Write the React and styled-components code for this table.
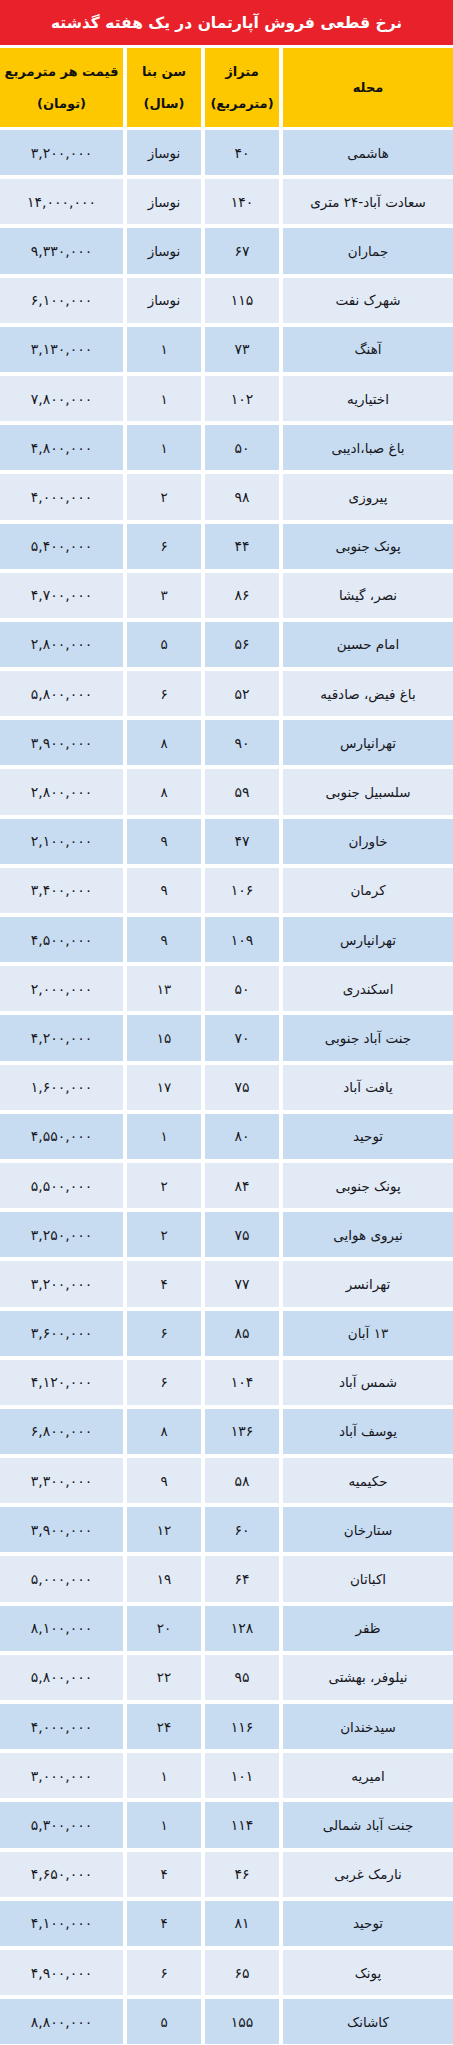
import React from "react";
import styled, { createGlobalStyle } from "styled-components";

const GlobalStyle = createGlobalStyle`
  html, body {
    margin: 0;
    padding: 0;
    background: #ffffff;
  }
  body {
    font-family: "DejaVu Sans", "Noto Sans", sans-serif;
  }
`;

const toFa = (v) =>
  String(v).replace(/[0-9]/g, (d) => "۰۱۲۳۴۵۶۷۸۹"[Number(d)]);

const fmt = (n) => toFa(n.toLocaleString("en-US"));

const rows = [
  ["هاشمی", 40, "نوساز", 3200000],
  ["سعادت آباد-۲۴ متری", 140, "نوساز", 14000000],
  ["جماران", 67, "نوساز", 9330000],
  ["شهرک نفت", 115, "نوساز", 6100000],
  ["آهنگ", 73, 1, 3130000],
  ["اختیاریه", 102, 1, 7800000],
  ["باغ صبا،ادیبی", 50, 1, 4800000],
  ["پیروزی", 98, 2, 4000000],
  ["پونک جنوبی", 44, 6, 5400000],
  ["نصر، گیشا", 86, 3, 4700000],
  ["امام حسین", 56, 5, 2800000],
  ["باغ فیض، صادقیه", 52, 6, 5800000],
  ["تهرانپارس", 90, 8, 3900000],
  ["سلسبیل جنوبی", 59, 8, 2800000],
  ["خاوران", 47, 9, 2100000],
  ["کرمان", 106, 9, 3400000],
  ["تهرانپارس", 109, 9, 4500000],
  ["اسکندری", 50, 13, 2000000],
  ["جنت آباد جنوبی", 70, 15, 4200000],
  ["یافت آباد", 75, 17, 1600000],
  ["توحید", 80, 1, 4550000],
  ["پونک جنوبی", 84, 2, 5500000],
  ["نیروی هوایی", 75, 2, 3250000],
  ["تهرانسر", 77, 4, 3200000],
  ["۱۳ آبان", 85, 6, 3600000],
  ["شمس آباد", 104, 6, 4120000],
  ["یوسف آباد", 136, 8, 6800000],
  ["حکیمیه", 58, 9, 3300000],
  ["ستارخان", 60, 12, 3900000],
  ["اکباتان", 64, 19, 5000000],
  ["ظفر", 128, 20, 8100000],
  ["نیلوفر، بهشتی", 95, 22, 5800000],
  ["سیدخندان", 116, 24, 4000000],
  ["امیریه", 101, 1, 3000000],
  ["جنت آباد شمالی", 114, 1, 5300000],
  ["نارمک غربی", 46, 4, 4650000],
  ["توحید", 81, 4, 4100000],
  ["پونک", 65, 6, 4900000],
  ["کاشانک", 155, 5, 8800000],
];

const Page = styled.div`
  width: 453px;
  direction: rtl;
  display: flex;
  flex-direction: column;
  gap: 3px;
`;

const TitleBar = styled.div`
  height: 45px;
  background: #e8212b;
  color: #ffffff;
  font-weight: bold;
  font-size: 15.5px;
  display: flex;
  align-items: center;
  justify-content: center;
  letter-spacing: -0.2px;
  white-space: nowrap;
`;

const GridRow = styled.div`
  display: grid;
  grid-template-columns: 170px 74px 74px 1fr;
  column-gap: 4px;
  height: ${(p) => p.$h};
`;

const HeadCell = styled.div`
  background: #fdc800;
  color: #111111;
  font-weight: bold;
  font-size: 13px;
  line-height: 32px;
  display: flex;
  flex-direction: column;
  align-items: center;
  justify-content: center;
  text-align: center;
  white-space: nowrap;
  letter-spacing: -0.4px;
`;

const Body = styled.div`
  display: flex;
  flex-direction: column;
  gap: 4px;
`;

const Cell = styled.div`
  background: ${(p) => (p.$dark ? "#c7dcf1" : "#e2eaf5")};
  color: #17171d;
  font-size: 13.5px;
  display: flex;
  align-items: center;
  justify-content: center;
  white-space: nowrap;
  letter-spacing: -0.2px;
`;

const NumCell = styled(Cell)`
  font-size: 14px;
  letter-spacing: 0.3px;
`;

export default function App() {
  return (
    <>
      <GlobalStyle />
      <Page>
        <TitleBar>نرخ قطعی فروش آپارتمان در یک هفته گذشته</TitleBar>
        <GridRow $h="79px">
          <HeadCell>محله</HeadCell>
          <HeadCell>
            <span>متراژ</span>
            <span>(مترمربع)</span>
          </HeadCell>
          <HeadCell>
            <span>سن بنا</span>
            <span>(سال)</span>
          </HeadCell>
          <HeadCell>
            <span>قیمت هر مترمربع</span>
            <span>(تومان)</span>
          </HeadCell>
        </GridRow>
        <Body>
          {rows.map(([name, area, age, price], i) => {
            const dark = i % 2 === 0;
            return (
              <GridRow $h="45.2px" key={i}>
                <Cell $dark={dark}>{name}</Cell>
                <NumCell $dark={dark}>{toFa(area)}</NumCell>
                <Cell $dark={dark}>{typeof age === "number" ? toFa(age) : age}</Cell>
                <NumCell $dark={dark}>{fmt(price)}</NumCell>
              </GridRow>
            );
          })}
        </Body>
      </Page>
    </>
  );
}
